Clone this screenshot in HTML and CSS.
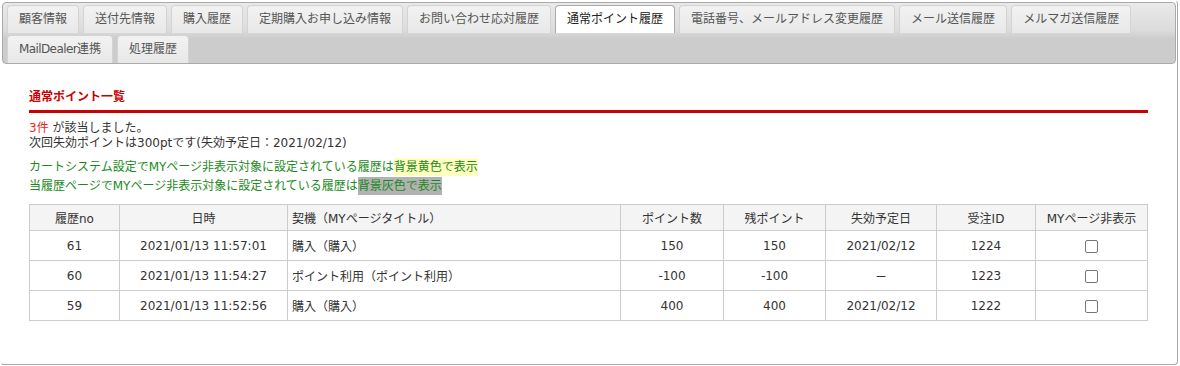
FILE: index.html
```html
<!DOCTYPE html>
<html lang="ja">
<head>
<meta charset="utf-8">
<title>通常ポイント履歴</title>
<link rel="stylesheet" href="styles.css">
</head>
<body>
<div class="widget">
  <ul class="tabs">
    <li class="tab">顧客情報</li>
    <li class="tab">送付先情報</li>
    <li class="tab">購入履歴</li>
    <li class="tab">定期購入お申し込み情報</li>
    <li class="tab">お問い合わせ応対履歴</li>
    <li class="tab active">通常ポイント履歴</li>
    <li class="tab">電話番号、メールアドレス変更履歴</li>
    <li class="tab">メール送信履歴</li>
    <li class="tab">メルマガ送信履歴</li>
    <li class="tab"><span class="latin">MailDealer</span>連携</li>
    <li class="tab">処理履歴</li>
  </ul>
  <div class="panel">
    <h2 class="title">通常ポイント一覧</h2>
    <p class="count"><span class="red">3件</span> が該当しました。<br>次回失効ポイントは300ptです(失効予定日：2021/02/12)</p>
    <p class="notes">カートシステム設定でMYページ非表示対象に設定されている履歴は<span class="hl-yellow">背景黄色で表示</span><br>当履歴ページでMYページ非表示対象に設定されている履歴は<span class="hl-gray">背景灰色で表示</span></p>
    <table class="list">
      <colgroup>
        <col class="c1"><col class="c2"><col class="c3"><col class="c4"><col class="c5"><col class="c6"><col class="c7"><col class="c8">
      </colgroup>
      <thead>
        <tr><th>履歴no</th><th>日時</th><th class="left">契機（MYページタイトル）</th><th>ポイント数</th><th>残ポイント</th><th>失効予定日</th><th>受注ID</th><th>MYページ非表示</th></tr>
      </thead>
      <tbody>
        <tr><td>61</td><td>2021/01/13 11:57:01</td><td class="left">購入（購入）</td><td>150</td><td>150</td><td>2021/02/12</td><td>1224</td><td><span class="check"></span></td></tr>
        <tr><td>60</td><td>2021/01/13 11:54:27</td><td class="left">ポイント利用（ポイント利用）</td><td>-100</td><td>-100</td><td><span class="dash">—</span></td><td>1223</td><td><span class="check"></span></td></tr>
        <tr><td>59</td><td>2021/01/13 11:52:56</td><td class="left">購入（購入）</td><td>400</td><td>400</td><td>2021/02/12</td><td>1222</td><td><span class="check"></span></td></tr>
      </tbody>
    </table>
  </div>
</div>
</body>
</html>
```

FILE: styles.css
```css
html, body {
  margin: 0;
  padding: 0;
  background: #fff;
}
body {
  font-family: "DejaVu Sans", "Noto Sans CJK JP", sans-serif;
  font-size: 12px;
  color: #333;
}
.widget {
  width: 1178px;
  height: 365px;
  box-sizing: border-box;
  border: 1px solid #aaa;
  border-top-color: #fff;
  border-left-color: #fff;
  border-radius: 4px;
  padding: 1px 1px 0 1px;
}
.tabs {
  list-style: none;
  margin: 0;
  padding: 2px 2px 0 4px;
  border: 1px solid #aaa;
  border-radius: 4px;
  background: linear-gradient(#e9e9e9 0%, #dcdcdc 45%, #cccccc 60%, #cccccc 100%);
  display: flex;
  flex-wrap: wrap;
  row-gap: 2px;
  column-gap: 4px;
}
.tab {
  height: 27px;
  line-height: 27px;
  padding: 0 11px;
  border: 1px solid #d3d3d3;
  border-bottom: 0;
  border-radius: 4px 4px 0 0;
  background: linear-gradient(#f2f2f2, #e8e8e8);
  color: #555;
  white-space: nowrap;
}
.tab.active {
  background: #fff;
  border-color: #aaa;
  color: #212121;
}
.latin {
  letter-spacing: -0.6px;
}
.panel {
  padding: 25px 28px 0 27px;
}
.title {
  margin: 0;
  font-size: 12px;
  line-height: 17px;
  color: #c00;
  font-weight: bold;
  padding-bottom: 4px;
  border-bottom: 3px solid #c00;
}
.count {
  margin: 8px 0 0;
  line-height: 15px;
}
.red {
  color: #e22;
}
.notes {
  margin: 7px 0 0;
  line-height: 19px;
  color: #1a8a1a;
}
.hl-yellow {
  background: #ffffc2;
  padding: 2px 0;
}
.hl-gray {
  background: #b2b2b2;
  padding: 2px 0;
}
.list {
  margin-top: 8px;
  width: 100%;
  border-collapse: collapse;
  table-layout: fixed;
}
.c1 { width: 90px; }
.c2 { width: 168px; }
.c3 { width: 333px; }
.c4 { width: 103px; }
.c5 { width: 102px; }
.c6 { width: 111px; }
.c7 { width: 99px; }
.c8 { width: 112px; }
.list th, .list td {
  border: 1px solid #ccc;
  text-align: center;
  font-weight: normal;
  color: #333;
  padding: 0 4px;
  white-space: nowrap;
}
.list th {
  background: #f3f4f3;
  height: 25px;
}
.list td {
  height: 29px;
}
.list .left {
  text-align: left;
}
.dash {
  display: inline-block;
  transform: scaleX(0.8);
}
.check {
  display: inline-block;
  width: 11px;
  height: 11px;
  border: 1px solid #767676;
  border-radius: 2px;
  background: #fff;
  vertical-align: middle;
}
```
